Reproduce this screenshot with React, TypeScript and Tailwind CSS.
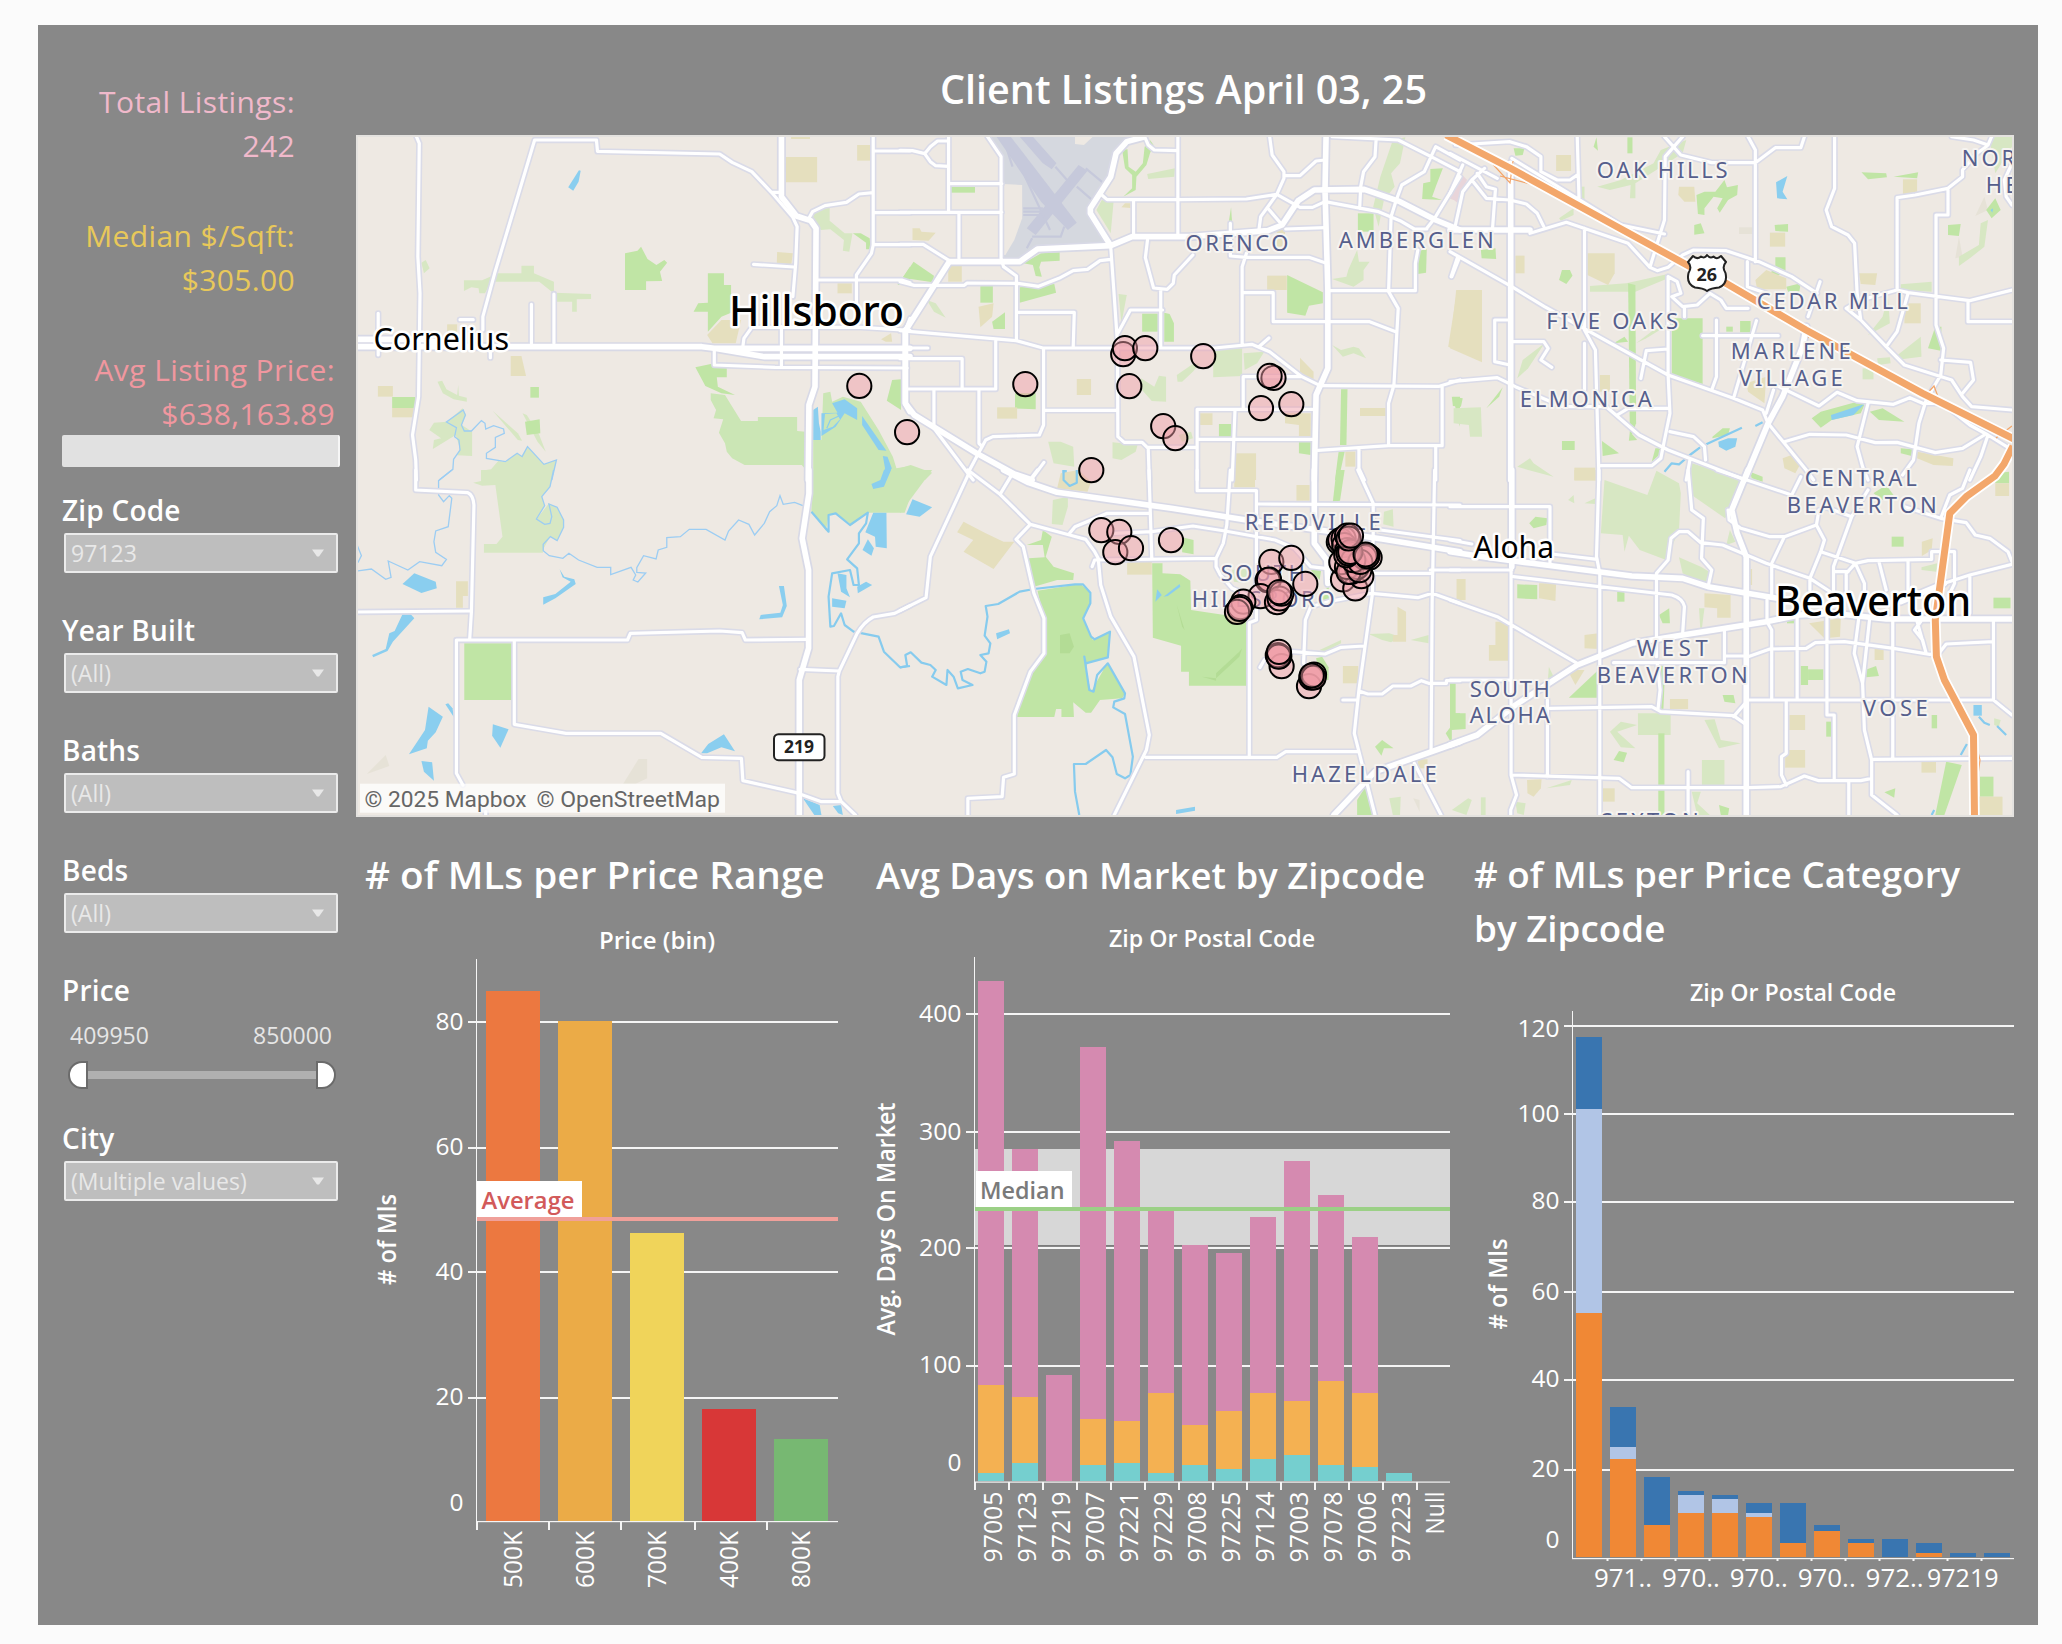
import React from "react";

type Pt = [number, number];

/* ------------------------------------------------------------------ */
/* Map geometry. Each tile holds shapes in its own local coordinates.  */
/* ------------------------------------------------------------------ */

type Tile = {
  transform: string;
  green?: string[];
  light?: string[];
  mid?: string[];
  tan?: string[];
  haze?: string[];
  pink?: string[];
  lakes?: string[];
  streams?: string;
  rivers?: string;
  minor: string;
  major: string;
};

const box = (x1: number, y1: number, x2: number, y2: number) =>
  `${x1},${y1} ${x2},${y1} ${x2},${y2} ${x1},${y2}`;

const TILES: Tile[] = [
  {
    transform: "translate(350 130) scale(0.357143 0.333333)",
    green: [
      "770,370 805,362 815,350 833,387 858,405 880,390 888,398 868,425 874,453 829,454 829,480 770,480",
      "1002,430 1047,430 1047,465 1067,465 1067,548 1040,560 1002,605 1002,545 962,545 975,520 1002,518",
      box(505, 771, 529, 803),
      "490,875 531,868 533,910 495,915",
      box(118, 801, 183, 834),
      box(1220, 100, 1240, 126),
      "967,712 1020,700 1055,715 1055,742 1027,742 1030,770 1078,795 1040,790 995,768",
      "1518,750 1543,748 1543,840 1503,812",
      "1408,310 1430,310 1455,325 1458,358 1445,358 1445,338",
      "1533,465 1568,410 1568,465",
    ],
    light: [
      "319,451 370,451 415,430 480,430 480,407 515,407 515,430 571,455 571,488 675,492 675,507 635,508 635,545 622,545 622,515 580,515 565,485 530,455 395,455 378,490 362,490 360,475 340,472 319,483",
      "1290,250 1343,232 1343,272 1385,310 1407,310 1398,365 1380,362 1383,330 1345,298 1318,300",
      "245,755 258,752 270,778 300,795 303,765 305,797 327,803 327,815 290,808 260,790",
      "222,900 235,878 272,875 315,835 325,855 313,885 342,905 342,978 300,976 308,955 296,915 232,957 235,930 255,925",
      "367,1022 395,1018 415,993 435,997 467,970 480,978 497,950 543,1003 578,990 565,1050 367,1050",
      "400,843 470,910 482,932 470,930",
      "483,850 495,855 530,915 548,965 525,935",
      "200,398 212,390 223,415 207,430",
    ],
    mid: [
      "1010,790 1050,795 1095,873 1142,873 1142,861 1252,861 1252,903 1275,905 1275,1018 1265,1005 1105,1005 1070,985 1055,965 1050,940 1033,908 1045,868 1018,865 1025,840 1010,810",
      "1297,930 1320,930 1325,790 1345,785 1350,815 1380,800 1430,815 1480,900 1520,980 1530,1015 1568,1008 1568,1050 1297,1050",
    ],
    tan: [
      box(78, 768, 120, 800),
      box(118, 834, 183, 862),
      "450,678 480,678 493,738 450,738",
      box(272, 583, 300, 612),
      box(1220, 81, 1308, 157),
      box(1420, 45, 1457, 92),
      "1196,366 1240,370 1235,408 1195,400",
      box(1365, 460, 1405, 490),
      box(1235, 20, 1288, 27),
      "1000,615 1040,570 1095,570 1080,640 1015,640",
      "1487,628 1515,610 1518,635 1500,635",
    ],
    lakes: [
      "611,172 641,121 646,122 640,155 625,182",
      "1297,840 1310,830 1313,880 1318,905 1318,930 1297,930",
      "1320,850 1365,848 1350,820 1385,808 1420,835 1420,870 1385,850 1360,890 1320,918",
      "1434,858 1502,962 1480,960 1434,885",
      "1492,978 1505,980 1517,1015 1500,1050 1487,1050 1498,1015",
    ],
    streams:
      "M250,1050L288,1018L290,988L308,960L305,930L293,920L298,893L270,876L317,840L323,855L312,885L320,903L340,903L368,872L378,880L380,897L402,887L430,897L432,910L407,922V952L382,970V985L435,995L468,970L482,980L497,950L543,1003L578,990L565,1050",
    minor:
      "M186,20L194,40L190,380L196,490L194,650L192,800L175,915L184,990L186,1050 M372,600V560L405,430L517,30H690L693,64L1035,72L1070,97L1125,125L1180,187H1205 M1180,187L1240,262L1252,290L1248,400L1240,500 M1130,403L1243,411 M79,550V675 M308,569H345 M508,523V640 M571,492V640 M393,650V683 M1020,660V705L1190,712L1560,714 M1100,650L1103,625L1125,592H1430L1568,601 M1208,590V710 M1285,265L1295,245L1330,227L1390,217L1425,192L1465,188 M1465,20V345L1460,370L1418,435V520 M1468,63H1568 M1468,248H1568 M1468,344H1568 M1310,450H1545L1568,458 M1555,600L1568,565",
    major:
      "M20,650H985L1020,655H1568 M20,628H200L330,650 M1020,655L1160,680H1568 M1208,20V200L1250,258L1290,272L1305,295L1302,770L1285,825L1283,1050 M1555,600V820L1568,845",
  },
  {
    transform: "translate(350 470) scale(0.357143 0.333333)",
    green: [box(320, 520, 456, 690)],
    light: [
      "367,0 570,0 560,50 537,80 545,105 522,148 557,100 580,115 598,150 598,170 580,212 560,200 540,240 540,248 375,248 375,222 410,222 427,200 407,45 370,47 345,38 367,33",
    ],
    mid: [
      "1292,0 1568,0 1568,85 1553,128 1450,128 1405,165 1360,130 1340,135 1333,182 1292,125",
    ],
    tan: ["297,334 330,334 330,378 316,378 316,413 297,413"],
    haze: ["47,912 100,855 110,888", "765,941 808,867 832,867 832,925 800,941"],
    lakes: [
      "147,342 180,310 240,335 243,355 200,369",
      "147,433 170,433 180,445 120,515 105,543 65,562 62,555 100,537 110,490 125,483",
      "220,710 260,740 240,787 218,812 215,835 165,853 210,780",
      "267,703 275,700 287,715 291,742",
      "400,763 444,778 421,833 398,797",
      "200,873 230,877 235,932 207,905",
      "983,850 1003,822 1047,793 1078,844 1040,832 1000,850",
      "587,298 600,320 628,328 632,342 575,385 541,404 541,382 575,372 618,335 595,322",
      "1201,348 1215,348 1223,408 1210,442 1146,448 1150,435 1205,428 1212,405",
      "1465,128 1502,128 1503,235 1472,230 1470,200 1443,187",
      "1268,985 1315,1005 1320,1035 1300,1035",
      "1352,1008 1375,1005 1380,1035 1367,1030",
      "1350,385 1390,392 1385,415 1350,410",
      "1365,310 1390,315 1390,355 1400,382 1375,365",
      "1420,350 1445,335 1462,345 1422,370",
      "1435,240 1450,208 1467,235 1460,257",
      "1460,42 1485,30 1495,0 1515,0 1495,50 1465,57",
    ],
    streams:
      "M285,0L248,32V75L262,95L278,77L285,85L275,170L240,183L235,215L240,247L270,268L257,287L195,275L162,300L107,273L115,322L100,328L60,297L20,303 M20,225L32,257L22,278 M570,0L560,50L537,80L545,107L522,147L545,163L560,160L565,140L557,102L580,112L598,150V172L580,212L561,200L541,223V242L558,257L596,265L613,250L640,270L692,292H730V314L787,292L800,315L793,330L806,336L828,309L803,307V293L822,257L857,267L863,240L887,232V203L925,200L950,178H997L1050,210L1060,183L1088,150L1117,163L1133,195L1160,160L1175,125L1195,107L1204,77L1213,103L1245,97L1268,107",
    rivers:
      "M1292,125L1340,185V135L1360,130L1400,165L1450,128L1445,160L1425,190V220L1392,268L1420,295L1425,345H1410L1400,300L1350,310L1340,380L1345,470L1355,468L1375,430L1385,465L1410,485L1480,500L1495,545L1540,592L1568,588",
    minor:
      "M184,0V60L330,68Q345,75 347,105L340,425L335,510 M20,426L335,423 M316,945L298,910V510H777L785,490L1035,483L1098,488L1107,510L1280,508 M460,515V763L605,790H870L985,862L1096,865L1100,932L1250,968L1320,995L1375,994 M1260,598L1370,603L1420,490Q1440,455 1465,441L1525,430L1568,407 M1370,603L1366,620V970L1375,994L1415,1035 M380,1025V1035",
    major: "M1285,0V70L1266,205L1284,300V535L1258,630V1035",
  },
  {
    transform: "translate(900 130) scale(0.357143 0.333333)",
    green: [
      "622,60 637,58 640,110 660,125 680,100 685,50 700,30 710,45 700,70 690,105 662,140 660,180 625,200 650,175 650,135 630,115",
      box(142, 171, 210, 188),
      "8,443 38,395 95,437 92,457 15,445",
      "345,400 395,370 447,367 447,392 395,395 390,412 397,440 380,438 372,405",
      "335,472 432,462 437,488 335,518",
      box(225, 468, 260, 518),
      "258,575 294,547 294,597 262,597",
      box(678, 551, 722, 605),
      "740,548 755,552 767,580 767,635 740,635",
      "1084,435 1184,487 1184,520 1145,527 1135,557 1084,548",
      "322,790 380,790 380,838 322,835",
      box(1282, 250, 1326, 305),
      "1450,365 1475,355 1473,428 1450,432",
      "1485,117 1520,115 1500,170 1490,200 1518,210 1462,207 1465,160 1485,155",
      "1235,778 1253,778 1250,945 1232,945",
      box(893, 882, 927, 920),
      "1228,965 1245,965 1228,1050 1218,1050",
      "1117,935 1150,935 1150,975 1117,970",
      "920,280 927,232 930,280",
      "1548,800 1568,800 1568,890",
    ],
    light: [
      "550,240 565,210 598,215 590,310",
      "692,132 770,115 768,140 695,147",
      "877,660 958,655 958,738 877,742",
      "775,735 820,702 840,700 820,725 790,755 777,755",
      "675,745 712,770 725,737 745,740 745,815 705,813 672,773",
      "1380,30 1415,22 1400,100 1375,130 1385,170 1355,210 1340,290 1325,230 1345,140",
      "1255,420 1280,360 1285,395 1315,395 1298,420 1298,450 1270,470 1210,447 1250,440",
      "415,935 450,935 485,950 488,1010 430,1000",
      "595,937 665,945 660,965 620,990 595,985",
      "1210,645 1235,660 1270,650 1285,655 1305,685 1270,670 1240,680",
      "612,492 635,495 620,580",
      "962,670 1020,665 1000,700 965,720",
      "75,510 100,520 128,563 95,545",
      "780,915 815,905 820,925 790,935",
    ],
    mid: ["0,1015 30,1005 90,1028 70,1050 0,1050"],
    tan: [
      "35,295 55,295 60,305 100,308 80,332 35,330",
      "220,530 262,520 258,560 225,592",
      box(135, 405, 173, 455),
      box(495, 747, 535, 795),
      box(272, 832, 328, 866),
      box(1028, 437, 1083, 480),
      "1560,480 1568,480 1568,665 1535,650",
      box(840, 850, 875, 885),
      "1078,850 1150,850 1150,918 1117,918 1117,885 1078,880",
      box(1288, 834, 1360, 858),
      box(936, 970, 997, 1050),
      "1120,683 1158,725 1158,748 1120,730",
      box(1247, 965, 1275, 1010),
      "620,232 630,220 645,220 645,234",
      box(1055, 300, 1078, 350),
    ],
    pink: ["1535,205 1568,140 1568,215"],
    lakes: [box(455, 1020, 467, 1050), box(485, 1033, 500, 1050)],
    minor:
      "M0,61L35,62L69,71L85,50L105,33H135 M69,71L85,95L100,107L135,109 M136,20V245 M0,247H285 M140,161H285 M165,250V385 M245,20L283,80V385L290,410L326,438V630 M0,343H65L138,392 M0,455L40,466H180L188,459L330,460L388,469L445,445L485,422L525,418L560,392L590,388 M326,547H488L485,650 M0,602L325,632L400,654H880L985,643L1035,665L1125,740L1175,766 M268,632V777H20 M0,686H174V775 M0,654H78 M95,778V895 M221,780V940L230,950 M402,655V885L390,915L260,920L240,930L222,965L190,1030 M404,841H605 M590,350L598,470L609,640L610,920L628,937H678L695,955L698,1050 M695,952H830 M565,195L580,209H780L970,207L1055,193 M654,213V315 M778,20V315 M685,20L695,45L712,60L778,62 M693,330L687,383L710,474L748,478L765,460L768,435L820,375 M730,478V650 M610,610L645,540H735 M925,280V378L970,382H1145L1190,398 M970,370L958,410V640 M960,488H1045V575H1315L1388,605 M1035,20L1042,75L1075,125V145L1055,193L1010,260L1005,300 M1075,137H1120L1165,93L1190,90 M1055,193L1120,232H1155L1190,215 M1030,235L1070,285 M1080,297L1190,293 M1333,30L1330,80L1298,125L1290,170L1287,235 M1190,215L1340,245L1400,272L1440,297H1475 M1210,20L1395,30L1487,80L1568,125 M1568,90L1500,50L1487,80L1468,125L1405,165L1388,215L1375,260L1368,485L1395,535L1383,765L1368,820V945 M1200,482H1443V400L1450,360 M1475,295L1495,268L1568,140 M1180,767L1510,769L1568,750 M1518,770V947H1368L1170,961 M961,835V740H1125 M832,1050V838H1155 M832,928H1155 M938,840L930,1050 M1285,955V1015L1300,1050 M1500,950V1050 M95,895L190,1030L205,1050 M403,997L370,1045 M1005,650L1033,624 M1543,440L1560,385",
    major:
      "M15,602V820L40,855L215,970L320,1032L370,1050 M15,602L138,395H335L385,357L590,347L650,320H810L1030,302L1070,285L1115,212L1160,180L1300,178L1400,215L1500,270L1568,300 M590,347L533,250V235L590,140L605,70L635,35L680,22 M1193,20L1190,180L1198,480V715L1165,795L1160,1050",
  },
  {
    transform: "translate(900 470) scale(0.357143 0.333333)",
    green: [
      "385,362 505,342 530,365 533,400 512,445 540,510 588,483 580,565 525,580 520,600 535,665 580,580 630,670 622,685 560,690 535,728 520,728 485,697 487,741 452,741 452,717 437,717 432,741 327,741 365,605 403,550 403,445",
      "400,180 425,200 408,260 430,290 487,310 485,330 440,330 375,350 360,265 405,262 400,225 355,225 395,210",
      "706,280 735,280 735,310 785,313 813,332 815,420 970,445 970,647 809,647 809,605 787,605 787,527 708,503",
      "790,202 822,210 822,253 790,247",
      "1222,0 1245,0 1232,92 1212,95",
      "1540,640 1555,640 1555,730 1568,730 1568,775 1540,775",
      "1280,1035 1280,990 1303,950 1322,1035",
      "1330,830 1350,810 1382,835 1355,835 1348,857",
      "1150,300 1180,295 1175,330",
      "1165,565 1182,560 1200,592 1200,630 1180,630",
      "1180,370 1200,350 1205,390 1185,395",
      "1528,790 1542,770 1540,812",
    ],
    light: [
      "428,90 470,80 470,110 455,165 425,162",
      "1312,492 1370,490 1400,500 1375,517 1350,510",
      "1355,125 1380,118 1382,170 1353,163",
      "1430,510 1480,495 1480,520",
      "1370,985 1402,980 1400,1035 1380,1035",
      "1175,540 1235,510 1235,520 1190,545",
      "930,300 975,295 970,340 935,335",
    ],
    mid: ["0,0 90,0 0,130"],
    tan: [
      "178,155 240,190 290,215 320,215 262,297 178,245 205,210 160,187",
      box(636, 273, 705, 314),
      box(936, 0, 994, 52),
      box(1110, 45, 1147, 92),
      box(1240, 588, 1283, 640),
      "1393,410 1417,425 1417,515 1380,515 1380,495 1393,495",
      "450,10 500,0 535,35 525,65 440,55",
      box(1560, 328, 1568, 388),
      box(1450, 868, 1477, 895),
    ],
    haze: ["1437,985 1455,990 1455,1025"],
    lakes: [
      "35,88 90,112 55,140 17,133",
      "269,490 305,478 308,490 272,508",
      "773,1020 826,1010 826,1022 773,1032",
      "720,358 733,375 715,395",
      "738,380 783,342 785,350 750,378",
    ],
    rivers:
      "M375,357L490,343H512L533,368V400L513,445L535,500L545,508L588,485L582,562L520,580L516,560L530,660L542,665L552,615L582,580L630,670L628,685L600,695L597,712L630,732L652,860L645,915L630,925L607,912L595,862L577,840L520,882H487L490,965L502,1035 M375,357L335,365L275,402L240,408L245,440L237,497L253,520L248,550L225,555L242,575L237,605L225,610L190,597L170,605L175,630L203,645L162,655L150,620L133,600L130,645L90,620L100,600L85,585L60,578L30,547L15,555L20,588L0,592 M458,0V30L475,48L495,38V0",
    minor:
      "M195,5L85,260L73,383L0,422 M190,0L280,73L310,20 M385,0L360,35 M280,73L365,163L475,195L520,208L545,245L555,265L562,345L590,440L655,560L698,795L690,840L600,1035 M475,190L490,170L580,130H700 M697,0L705,265 M365,163L325,208L345,230L375,370L403,445V550L365,605L320,735V912L290,922L286,980L190,985V1035 M538,290L545,270L885,265 M600,190L705,185L820,168L910,183L1050,210L1105,235L1150,290L1190,295 M925,0L915,165L905,220L885,265V290L897,315L930,355L985,380 M832,0V62H998V450L978,458V862 M1003,102L1568,105 M688,862H1055L1080,845H1285 M1282,0L1325,100V190 M1497,0L1490,400L1487,840 M1568,300H1485 M1310,310H1485 M1200,395L1320,370L1450,383L1490,370L1568,400 M1325,180L1323,370L1285,660L1272,790L1285,845L1330,1035 M1200,395L1150,410L1135,450L1130,580 M1100,545L1190,552L1235,532L1300,528 M1008,592L1020,570 M1285,663L1310,672H1350L1380,648H1430L1460,632L1480,640H1530V632H1568 M1240,690H1280 M1440,880L1515,1035 M1345,180L1568,212",
    major:
      "M290,0L360,38L440,67L760,115L970,150L1240,190L1350,207L1568,245 M1160,0V220L1195,270L1198,340 M1215,1035L1330,905L1568,815",
  },
  {
    transform: "translate(1450 130) scale(0.363508 0.333333)",
    green: [
      "175,55 205,55 200,75 180,77",
      "395,50 403,22 407,62",
      box(488, 22, 502, 70),
      "610,565 695,565 695,762 610,735",
      "678,195 700,185 730,185 755,150 762,172 792,165 790,195 765,210 742,248 735,235 750,205 725,200 700,235 700,255 682,252",
      "672,285 690,280 700,310 672,314",
      "893,285 930,282 930,305 895,303",
      "895,382 923,382 923,430 870,445 895,410",
      "85,360 125,355 127,387 87,385",
      "308,420 330,420 337,437 320,462 300,450",
      "490,460 510,465 512,880 495,930",
      "1370,285 1405,282 1400,318 1370,315",
      "1315,655 1335,590 1352,590 1350,662",
      "1132,127 1200,130 1202,142 1150,148",
      "1220,140 1288,127 1285,145",
      "1475,240 1500,205 1515,240 1490,265",
      "995,865 1020,845 1120,815 1140,825 1130,850 1050,870 1020,893",
      "1155,845 1190,835 1250,875 1180,870",
      box(308, 933, 343, 960),
      "418,933 465,970 420,978",
      box(760, 590, 778, 605),
      box(798, 573, 827, 607),
      "722,920 750,895 770,895 765,915 722,925",
      "5,800 35,805 30,830 8,828",
      "450,640 480,620 490,635",
      "925,470 965,460 960,490 930,485",
      "1240,955 1272,958 1270,978 1240,970",
      "555,995 565,955 578,955 575,975",
      "495,905 515,930 492,932",
      "100,835 145,772 135,800",
    ],
    light: [
      "405,170 470,150 560,100 580,60 650,30 640,70 510,160 510,205 495,205 497,165 440,180",
      box(360, 170, 370, 210),
      "385,468 485,460 600,432 600,445 510,485 385,485",
      "10,835 85,832 88,920 55,920 52,885 10,880",
      "300,265 340,235 340,255 305,272",
      "185,745 200,690 260,640 215,715",
      "1240,463 1325,455 1325,485 1240,480",
      "1220,685 1295,620 1297,680 1225,690",
      box(1135, 715, 1165, 748),
      "1175,685 1210,682 1212,700 1178,705",
      "1460,280 1480,270 1470,350 1430,385 1400,408 1400,380 1455,345",
      "1150,615 1190,560 1205,500 1210,580",
      "665,1000 800,1045 800,1050 655,1050",
      "512,640 560,600 600,585 540,625",
      "185,1010 220,985 230,1000 285,1040 215,1020",
      "1480,22 1546,20 1546,50 1500,130 1490,60",
    ],
    tan: [
      box(292, 75, 333, 123),
      "630,170 672,170 675,215 645,215 628,195",
      "378,370 453,370 453,430 435,465 378,435",
      box(180, 377, 205, 430),
      box(880, 308, 922, 350),
      "840,450 870,420 925,445 925,478 845,478",
      "1125,430 1175,430 1170,465 1130,462",
      box(1250, 520, 1295, 580),
      "17,480 88,480 88,697 0,655",
      "815,760 870,740 865,820 820,785",
      box(1246, 148, 1285, 195),
      "1285,965 1385,985 1383,1008 1330,1005 1285,985",
      "915,985 940,975 965,1000 950,1030 920,1015",
      box(342, 1013, 400, 1050),
      box(412, 735, 440, 785),
    ],
    haze: [box(795, 292, 832, 312), "1445,258 1470,200 1480,240", "1390,385 1400,320 1410,380"],
    pink: ["0,200 30,130 47,150 20,218"],
    lakes: [
      "897,157 928,138 915,185 928,208 900,205",
      "1048,855 1140,822 1110,855 1050,870",
      "738,935 765,925 790,925 785,950 760,962 740,950",
      "1487,240 1494,235 1492,248",
    ],
    rivers: "M705,943L803,893 M840,888L860,877 M590,1025L610,1000L630,1003L660,975L688,952",
    minor:
      "M15,45L165,35L210,50L250,80V125L295,150H330L350,135 M350,20L355,210 M0,70L130,145 M60,150L95,115 M35,105L0,190 M60,150L100,205L165,210L210,222L240,250L258,290 M75,130L100,170L125,178L117,295 M60,150L35,185L15,285 M170,85L470,285L590,312 M220,310L320,277L490,340L550,412L570,422L600,412L640,375L670,360L760,362L850,395L940,440L1010,490 M370,295V600L400,660L410,1050 M550,412L570,340L590,270L592,80L640,20 M590,20L635,75L720,98H840L895,53H965L975,20 M820,20L840,60V395 M818,395V470L870,490 M1058,20V175L1035,240L1050,290L1095,315L1113,340L1120,490L1130,570L1200,650L1250,705L1380,750L1410,800L1435,830L1546,840 M1380,20L1440,30L1480,45L1490,20 M1475,50L1450,70L1410,120V140L1370,175L1280,195L1230,203V480L1260,488L1430,512L1546,480 M1370,175V255H1337V585L1358,655L1350,735L1310,810L1290,880L1275,990L1245,1035 M1350,690L1432,697L1440,750L1410,790 M1425,512V575H1546 M1230,480L1130,510L1090,535L1130,570 M1260,490L1230,605L1200,650 M1018,455L985,560 M0,365L170,470L260,530L600,735L780,805L860,840L875,880L920,940L980,1020L1000,1050 M5,440L25,385 M600,440V735L605,850L590,930L580,985L555,1007H415 M600,440L625,455L635,490L610,500L640,530L680,525L715,490L745,510L760,535H820 M645,560V530 M733,570V740L720,780 M695,617H903 M843,572L780,805 M525,745L540,662L600,657 M175,635H258L270,655L250,690L280,712 M160,570H123V695L165,705 M0,755L130,743L180,770L310,830H430L520,915L600,960L800,1045 M370,640V780 M460,855L490,835H600 M605,905L670,920L700,950L703,990 M660,990L650,1050 M890,780L870,850 M905,770L1015,828L1065,787L1120,812L1220,823L1265,803L1300,820H1355L1430,885L1480,915L1546,960 M1150,820L1120,950L1135,1010L1150,1050 M920,935L990,913L1090,915L1170,938L1230,937L1335,968L1410,955L1470,915 M1480,915L1460,980L1430,1050 M1546,100 L1525,150L1530,200L1546,225",
    major: "M0,300H220 M167,100V1050 M980,590L970,650L915,800L875,880L810,1050",
  },
  {
    transform: "translate(1450 470) scale(0.363508 0.333333)",
    light: [
      "425,30 543,75 568,2 630,40 635,70 630,180 595,270 522,240 492,197 480,245 475,195 415,190",
      "660,0 740,0 815,30 757,145 665,75",
      "630,262 690,290 720,310 700,345 640,310",
      "760,225 770,180 785,215",
      box(517, 730, 607, 795),
      "440,785 470,755 515,765 460,785 510,835 470,832",
      box(693, 870, 755, 945),
      "700,750 728,748 745,810 800,820 740,835",
      "5,1020 50,985 60,990 45,1035",
      box(85, 982, 98, 1035),
      "1297,292 1340,280 1338,305 1297,300",
      "685,415 700,415 690,500",
      "268,650 272,590 285,620",
      "665,965 690,965 680,1000 715,1035 680,1035",
      "265,955 335,930 330,945",
      "180,995 208,1000 203,1035 185,1030",
      "325,90 340,75 342,100",
      "370,100 400,85 400,102",
      "1497,745 1515,750 1510,770 1497,765",
    ],
    green: [
      "185,343 240,345 240,388 185,385",
      "218,160 235,140 268,145 265,165 230,175",
      "327,683 405,603 407,683",
      "575,435 603,415 605,460 585,460",
      box(460, 365, 480, 395),
      box(965, 588, 985, 645),
      box(985, 598, 1027, 630),
      "1142,600 1172,588 1180,618 1145,622",
      "0,640 15,640 15,730 43,730 43,777 5,780 5,820 0,820",
      box(1215, 200, 1248, 230),
      box(1495, 383, 1542, 415),
      box(573, 790, 590, 1035),
      "575,585 592,590 587,720 577,718",
      "750,675 780,675 785,700 755,695",
      box(1035, 755, 1048, 800),
      "450,870 465,843 487,848 478,877",
      "740,1005 768,1015 765,1035 745,1035",
      "1195,967 1225,955 1222,983",
      box(1325, 735, 1340, 775),
      "1335,1035 1365,875 1408,885 1360,1035",
      box(1458, 920, 1495, 980),
      "1165,70 1200,45 1220,75 1190,90",
      "825,5 860,20 860,35 830,25",
      "1500,10 1538,5 1538,40 1500,40",
      box(927, 445, 950, 460),
    ],
    tan: [
      box(342, 0, 402, 32),
      box(18, 327, 43, 390),
      "245,340 292,340 290,393 245,385",
      "125,455 162,455 162,572 107,572 107,525 125,525",
      "370,495 408,490 408,537 370,535",
      "323,600 370,600 345,645",
      box(605, 687, 655, 717),
      "700,370 772,375 772,443 735,443 735,415 700,412",
      "988,460 1075,445 1073,500 1030,505",
      box(1168, 535, 1193, 570),
      box(933, 735, 977, 780),
      box(922, 840, 977, 893),
      box(420, 955, 453, 995),
      box(1297, 873, 1337, 908),
      "1298,215 1328,205 1325,240 1298,258",
      box(1440, 980, 1520, 1035),
      "212,930 252,928 250,955 230,980 213,970",
      box(1500, 40, 1538, 78),
      box(825, 297, 831, 345),
    ],
    lakes: [box(1440, 705, 1463, 737)],
    rivers: "M1455,740L1470,758L1485,765 M1505,768L1530,795 M1405,855L1422,822 M1325,1035L1332,1020",
    minor:
      "M410,0L403,260L412,310V1035 M0,110H275V280 M0,210L60,222 M280,252L405,268 M0,300H170 M175,320L410,350L610,375Q640,385 645,410L640,490 M568,560V310L600,270L608,205L630,185H655L690,218L750,225L870,280L990,325L1060,375 M655,0L665,120L697,145L692,265L720,300L710,350 M765,120L768,150L800,175L880,200H920L1008,165 M920,200L885,280V385 M735,0L940,75L965,20 M1015,120L1008,165L1030,210L1020,245L990,325V360 M1150,60L1105,140L1055,290V365 M1105,140L1030,110 M1020,245L1115,280L1150,272L1325,268V245H1388V340L1375,370 M1115,280L1090,310V360 M1060,305H1095 M1115,280L1140,340V380 M1180,275L1200,360 M1260,272V370 M1350,145L1250,110 M1430,0L1410,55L1375,75L1350,145L1420,158L1445,195L1485,205L1535,245L1546,275 M1546,283L1430,315L1360,340 M1430,315V430 M872,390V455L885,480V690 M955,440V690 M1037,440V735H1057V930 M1125,440L1112,550L1135,640L1140,780L1160,870V975L1230,1035 M1155,440L1135,640 M1218,450V865 M1295,455L1278,480L1300,510L1310,550L1285,455 M1495,455V690 M820,560L880,537L980,535L1005,518L1085,515L1220,535L1320,553L1345,550L1365,522L1495,515 M755,480V578H450 M755,558H820 M780,740L820,690H1495L1546,735 M275,715L555,710L580,725L780,737L810,760 M570,580L578,660L572,720 M0,390L130,440L350,580 M168,290V915L183,975L167,1020V1035 M268,690V920 M168,915L465,925L500,953H820L910,950L975,918L1015,932H1130L1160,925 M655,905V1035 M925,695V850L912,860V915L925,945 M1097,935V1035 M1165,868L1546,865 M0,630H165",
    major:
      "M170,0V290 M820,0L775,120L790,190L815,260V1035 M0,245L100,262L225,280L500,318L640,325L710,350L900,385 M0,825L75,795L180,705L350,585L500,520L640,495L870,455L960,435L1050,430L1200,447H1546 M1240,395L1360,340",
  },
];

const HIGHWAY_A = "M1446,135L1510,168L1617,226.7L1690,266.7L1726,283.3L1806,330L1922.6,393.3L2016,440";
const HIGHWAY_B = "M2013,446L2004,464L1995,476L1966.2,496.7L1949.8,513.3L1935.3,620L1936.4,656.7L1944.4,680L1973.5,735L1974.5,817";

/* x, baseline, width, text */
const PLACES: [number, number, number, string][] = [
  [1186.8, 250.7, 101, "ORENCO"],
  [1340, 247.3, 153, "AMBERGLEN"],
  [1246, 529.7, 134, "REEDVILLE"],
  [1222, 580.7, 82, "SOUTH"],
  [1193, 607, 141, "HILLSBORO"],
  [1293, 782, 143, "HAZELDALE"],
  [1598, 178, 129, "OAK HILLS"],
  [1963, 166, 86, "NORTH"],
  [1987, 193, 80, "HEIGH"],
  [1758, 309, 149, "CEDAR MILL"],
  [1547.5, 328.7, 130, "FIVE OAKS"],
  [1732, 359, 118, "MARLENE"],
  [1740, 386, 102, "VILLAGE"],
  [1521, 407, 130, "ELMONICA"],
  [1806, 486, 110, "CENTRAL"],
  [1788, 512.7, 148, "BEAVERTON"],
  [1638, 656, 69, "WEST"],
  [1598, 683, 149, "BEAVERTON"],
  [1471, 697, 78, "SOUTH"],
  [1471, 723, 78, "ALOHA"],
  [1864, 715.7, 63, "VOSE"],
  [1602, 828.5, 96, "SEXTON"],
];

/* x, baseline, width, font size, text */
const CITIES: [number, number, number, number, string][] = [
  [729, 326.3, 175, 41, "Hillsboro"],
  [373.5, 350.3, 135.5, 31, "Cornelius"],
  [1473.5, 558, 80.5, 31, "Aloha"],
  [1775, 616, 196, 41, "Beaverton"],
];

const LISTINGS: Pt[] = [
  [859, 385.7], [906.8, 432], [1025, 384], [1122.9, 354], [1124.6, 348], [1145, 348], [1202.9, 356],
  [1129, 386], [1273.2, 377.7], [1269.3, 375.7], [1260.7, 408], [1291, 404], [1162.9, 426], [1175, 438],
  [1091, 470], [1101, 530], [1119, 531.7], [1115, 552], [1130.7, 548], [1170.7, 540],
  [1271, 561.7], [1291, 557.7], [1305, 583.7], [1267.3, 580], [1268.7, 579.3], [1260.3, 596],
  [1243, 601.5], [1240, 607], [1236.7, 611.7], [1239.3, 608.7], [1276.7, 602], [1279.3, 598.3], [1281, 593.5], [1279, 592],
  [1281.3, 666], [1279, 656], [1277.5, 655], [1278.3, 656.5], [1278.7, 651.7],
  [1308.7, 686], [1311, 677.5], [1313.7, 674.3], [1313.3, 677.3], [1311.5, 675.3],
  [1342.7, 579.3], [1355, 588.3], [1361, 576], [1350.7, 571.7], [1341, 562], [1346.7, 566.7], [1356.7, 566.7],
  [1348.3, 571.7], [1359, 570], [1369.3, 557.3], [1367, 555.5], [1364, 557], [1338.5, 541.7], [1340, 540],
  [1343.3, 538.3], [1344, 545], [1347, 550], [1353, 560], [1360, 561.7], [1346, 555], [1348.3, 553.3],
  [1350, 551.7], [1366.7, 556], [1365.3, 554.3], [1346.7, 535.5], [1348.3, 538.3], [1350.7, 535.5],
];

const FONT = "'Open Sans', 'Noto Sans', sans-serif";

function Txt(props: {
  x: number;
  y: number;
  w?: number;
  size?: number;
  weight?: number;
  fill?: string;
  anchor?: "start" | "end" | "middle";
  family?: string;
  vertical?: boolean;
  children: string;
}) {
  const { x, y, w, size = 24, weight = 400, fill = "#fff", anchor = "start", family = FONT, vertical, children } = props;
  return (
    <text
      x={vertical ? 0 : x}
      y={vertical ? 0 : y}
      transform={vertical ? `translate(${x} ${y}) rotate(-90)` : undefined}
      fontSize={size}
      fontWeight={weight}
      fill={fill}
      textAnchor={anchor}
      fontFamily={family}
      textLength={w}
      lengthAdjust="spacingAndGlyphs"
    >
      {children}
    </text>
  );
}

function Polys({ items, fill }: { items?: string[]; fill: string }) {
  return (
    <>
      {(items ?? []).map((p, i) => (
        <polygon key={i} points={p} fill={fill} />
      ))}
    </>
  );
}

function RoadPass({ kind, color, width }: { kind: "minor" | "major"; color: string; width: number }) {
  return (
    <>
      {TILES.map((t, i) => (
        <g key={i} transform={t.transform}>
          <path
            d={t[kind]}
            fill="none"
            stroke={color}
            strokeWidth={width}
            strokeLinejoin="round"
            strokeLinecap="round"
            vectorEffect="non-scaling-stroke"
          />
        </g>
      ))}
    </>
  );
}

function ListingMap() {
  return (
    <svg className="block shrink-0" width={1658} height={682} viewBox="356 135 1658 682">
      <defs>
        <clipPath id="mapArea">
          <rect x={358} y={137} width={1654} height={678} />
        </clipPath>
      </defs>
      <rect x={356} y={135} width={1658} height={682} fill="#e4e2df" />
      <g clipPath="url(#mapArea)">
        <rect x={358} y={137} width={1654} height={678} fill="#eee9e3" />

        {/* airport */}
        <g transform={TILES[2].transform}>
          <polygon
            points="250,20 645,20 610,70 590,140 535,230 535,250 585,345 390,352 335,385 290,385 290,80"
            fill="#d5d8df"
          />
          <polygon points="290,162 342,165 342,265 320,330 295,375 290,375" fill="#eee9e3" />
          <polygon points="490,20 540,20 515,45 490,42" fill="#eee9e3" />
          <polygon points="270,20 310,20 495,278 470,300 395,215" fill="#c6c9db" />
          <polygon points="500,105 525,122 380,315 355,295" fill="#c6c9db" />
          <polygon points="335,20 372,20 438,100 425,118 400,100" fill="#c6c9db" />
          <path
            d="M345,120L350,140L420,300 M435,110L480,165 M495,170L540,212 M520,115L568,158 M300,60L315,110 M345,235H400 M345,245H395 M345,255H390 M370,320H450L460,290 M355,355L370,325"
            fill="none"
            stroke="#c6c9db"
            strokeWidth={2.2}
            vectorEffect="non-scaling-stroke"
          />
        </g>

        {TILES.map((t, i) => (
          <g key={i} transform={t.transform}>
            <Polys items={t.haze} fill="#e6e2d7" />
            <Polys items={t.light} fill="#d7e7c3" />
            <Polys items={t.mid} fill="#cbe6b5" />
            <Polys items={t.green} fill="#c0e5a5" />
            <Polys items={t.tan} fill="#e5dfbe" />
            <Polys items={t.pink} fill="#e8d5da" />
            <Polys items={t.lakes} fill="#8aceef" />
            <path d={t.streams} fill="none" stroke="#9ccdf3" strokeWidth={1.3} vectorEffect="non-scaling-stroke" />
            <path d={t.rivers} fill="none" stroke="#86cbee" strokeWidth={2.2} strokeLinejoin="round" vectorEffect="non-scaling-stroke" />
          </g>
        ))}

        <g transform={TILES[3].transform} fill="#b3dc95">
          <polygon points="448,495 475,490 487,530 475,550 448,550" />
          <polygon points="845,620 885,632 885,610 950,545 958,535 950,560 885,625" />
          <polygon points="775,405 797,480 790,470" />
        </g>
        <g transform={TILES[0].transform}>
          <polygon points="1330,852 1362,850 1372,868 1352,890 1326,900" fill="#cbe6b5" />
          <path d="M1335,895L1345,870L1375,855" stroke="#8aceef" strokeWidth={1.2} fill="none" vectorEffect="non-scaling-stroke" />
        </g>

        <RoadPass kind="minor" color="#dadbe8" width={6.4} />
        <RoadPass kind="major" color="#d8d9e6" width={9} />
        <RoadPass kind="minor" color="#ffffff" width={3.2} />
        <RoadPass kind="major" color="#ffffff" width={5.6} />

        <path
          d="M1489,160L1510,183L1513,161 M1500,176L1530,184 M1923,398L1934,386L1940,402 M1996,438L2012,426 M1803,325L1809,338 M2004,466L2012,452 M1935,600L1941,570 M1978,752L1980,760L1976,790"
          fill="none"
          stroke="#f3a569"
          strokeWidth={1.2}
        />
        {[HIGHWAY_A, HIGHWAY_B].map((d, i) => (
          <path key={i} d={d} fill="none" stroke="#ffffff" strokeWidth={10.5} strokeLinejoin="round" />
        ))}
        {[HIGHWAY_A, HIGHWAY_B].map((d, i) => (
          <path key={i} d={d} fill="none" stroke="#f3a76b" strokeWidth={7} strokeLinejoin="round" />
        ))}

        {/* place names */}
        <g stroke="#f6f4f1" strokeWidth={4} strokeLinejoin="round" style={{ paintOrder: "stroke" }}>
          {PLACES.map(([x, y, w, s], i) => (
            <text
              key={i}
              x={x - 1.3}
              y={y + 0.3}
              fontSize={22}
              textLength={w + 2}
              fill="#565f8c"
              fontFamily="'Noto Sans', 'Open Sans', sans-serif"
            >
              {s}
            </text>
          ))}
        </g>
        <g stroke="#ffffff" strokeWidth={5} strokeLinejoin="round" style={{ paintOrder: "stroke" }}>
          {CITIES.map(([x, y, w, size, s]) => (
            <Txt
              key={s}
              x={x}
              y={y}
              w={w}
              size={size}
              weight={size > 40 ? 500 : 400}
              fill="#000"
              family="'Noto Sans', 'Open Sans', sans-serif"
            >
              {s}
            </Txt>
          ))}
        </g>

        {/* route shields */}
        <rect x={774} y={734.2} width={50.5} height={26} rx={4.5} fill="#fff" stroke="#222" strokeWidth={2} />
        <Txt x={784} y={753} w={30} size={18} weight={700} fill="#222">
          219
        </Txt>
        <path
          d="M1693,256 Q1697,260 1701,256.500 Q1704.500,259 1707,255 Q1710,259 1713.500,256.500 Q1717,260 1721,256 L1726,262 Q1721.500,267 1725.500,273 Q1728,284 1719,287.500 Q1711,288 1707,291 Q1703,288 1695,287.500 Q1686,284 1688.500,273 Q1692.500,267 1688,262 Z"
          fill="#fff"
          stroke="#222"
          strokeWidth={2}
          strokeLinejoin="round"
        />
        <Txt x={1696.5} y={280.6} w={20.5} size={18} weight={700} fill="#222">
          26
        </Txt>

        {LISTINGS.map(([cx, cy], i) => (
          <circle key={i} cx={cx + 0.3} cy={cy + 0.2} r={12.1} fill="#f19ca8" fillOpacity={0.48} stroke="#000" strokeWidth={2} />
        ))}

        <rect x={360} y={783.7} width={365} height={29} fill="#fff" fillOpacity={0.75} />
        <Txt x={364.5} y={806.7} w={162} size={22} fill="#666" family="Roboto, sans-serif">
          © 2025 Mapbox
        </Txt>
        <Txt x={536.5} y={806.7} w={183.5} size={22} fill="#666" family="Roboto, sans-serif">
          © OpenStreetMap
        </Txt>
      </g>
    </svg>
  );
}

/* ------------------------------------------------------------------ */
/* Charts                                                              */
/* ------------------------------------------------------------------ */

const AXIS = "#f5f5f5";

function Grid({ rows, x1, x2 }: { rows: number[]; x1: number; x2: number }) {
  return (
    <>
      {rows.map((y) => (
        <rect key={y} x={x1} y={y - 1} width={x2 - x1} height={2} fill={AXIS} />
      ))}
    </>
  );
}

const PRICE_BARS: [number, number, string, string][] = [
  [486, 991, "#ec7840", "500K"],
  [558, 1021, "#ebab47", "600K"],
  [630, 1233, "#f0d45a", "700K"],
  [702, 1409, "#d83737", "400K"],
  [774, 1439, "#77b872", "800K"],
];

function PriceRangeChart() {
  return (
    <svg className="block" width={506} height={724} viewBox="356 901 506 724">
      <Txt x={599} y={949} w={116} size={23} weight={600}>
        Price (bin)
      </Txt>
      <Grid rows={[1022, 1148, 1272, 1398]} x1={468} x2={838} />
      {PRICE_BARS.map(([x, top, fill, label]) => (
        <React.Fragment key={label}>
          <rect x={x} y={top} width={54} height={1521 - top} fill={fill} />
          <Txt x={x + 36} y={1531} w={57} size={25} anchor="end" vertical>
            {label}
          </Txt>
        </React.Fragment>
      ))}
      <rect x={476} y={959} width={1} height={563} fill={AXIS} />
      <rect x={476} y={1521} width={362} height={1.2} fill={AXIS} />
      {[476, 548, 620, 694, 766].map((x) => (
        <rect key={x} x={x} y={1522} width={2} height={8} fill={AXIS} />
      ))}
      {([["80", 1029.5], ["60", 1155], ["40", 1279.5], ["20", 1405], ["0", 1511]] as [string, number][]).map(([s, y]) => (
        <Txt key={s} x={463.5} y={y} w={s === "0" ? 14 : 28} size={24} anchor="end">
          {s}
        </Txt>
      ))}
      <rect x={477} y={1217} width={361} height={4} fill="#f0a09a" />
      <rect x={477} y={1181} width={105} height={36} fill="#fff" />
      <Txt x={481.5} y={1209} w={93} size={24} weight={600} fill="#d25a5a">
        Average
      </Txt>
      <Txt x={396} y={1285} w={91} size={25} weight={650} vertical>
        # of Mls
      </Txt>
    </svg>
  );
}

/* label, total top, orange top, teal top */
const DAYS: [string, number | null, number | null, number | null][] = [
  ["97005", 981, 1385, 1473],
  ["97123", 1149, 1397, 1463],
  ["97219", 1375, null, null],
  ["97007", 1047, 1419, 1465],
  ["97221", 1141, 1421, 1463],
  ["97229", 1211, 1393, 1473],
  ["97008", 1245, 1425, 1465],
  ["97225", 1253, 1411, 1469],
  ["97124", 1217, 1393, 1459],
  ["97003", 1161, 1401, 1455],
  ["97078", 1195, 1381, 1465],
  ["97006", 1237, 1393, 1467],
  ["97223", null, null, 1473],
  ["Null", null, null, null],
];

function DaysOnMarketChart() {
  return (
    <svg className="block" width={596} height={724} viewBox="862 901 596 724">
      <Txt x={1109} y={947} w={206} size={23} weight={600}>
        Zip Or Postal Code
      </Txt>
      <Grid rows={[1014, 1132, 1248, 1366]} x1={966} x2={1450} />
      <rect x={975} y={1149} width={475} height={96} fill="#d7d7d7" />
      <rect x={975} y={1245} width={475} height={1} fill="#7c7c7c" />
      {DAYS.map(([label, total, orange, teal], i) => {
        const x = 978 + Math.round(i * 34.03);
        return (
          <React.Fragment key={label}>
            {total !== null && <rect x={x} y={total} width={26} height={1481 - total} fill="#d58ab0" />}
            {orange !== null && <rect x={x} y={orange} width={26} height={1481 - orange} fill="#f4b152" />}
            {teal !== null && <rect x={x} y={teal} width={26} height={1481 - teal} fill="#75cfcf" />}
            <rect x={974 + Math.round(i * 34.03)} y={1482} width={2} height={8} fill={AXIS} />
            <Txt x={x + 23.5} y={1491.5} w={label === "Null" ? 43 : 71} size={25} anchor="end" vertical>
              {label}
            </Txt>
          </React.Fragment>
        );
      })}
      <rect x={974} y={957} width={1} height={525} fill={AXIS} />
      <rect x={974} y={1481.5} width={476} height={1.2} fill={AXIS} />
      {([["400", 1021.5], ["300", 1139.5], ["200", 1255.5], ["100", 1373], ["0", 1471]] as [string, number][]).map(([s, y]) => (
        <Txt key={s} x={961.5} y={y} w={s === "0" ? 14 : 42.5} size={24} anchor="end">
          {s}
        </Txt>
      ))}
      <rect x={975} y={1207} width={475} height={4} fill="#9bd086" />
      <rect x={976} y={1171} width={96} height={36} fill="#fff" />
      <Txt x={980} y={1199} w={84.5} size={24} weight={550} fill="#7a7a7a">
        Median
      </Txt>
      <Txt x={894.5} y={1335.5} w={233} size={25} weight={650} vertical>
        Avg. Days On Market
      </Txt>
    </svg>
  );
}

/* blue top, light top, orange top */
const CATEGORY: [number, number | null, number | null][] = [
  [1037, 1109, 1313],
  [1407, 1447, 1459],
  [1477, null, 1525],
  [1491, 1495, 1513],
  [1495, 1499, 1513],
  [1503, 1513, 1517],
  [1503, null, 1543],
  [1525, null, 1531],
  [1539, null, 1543],
  [1539, null, null],
  [1543, null, 1553],
  [1553, null, null],
  [1553, null, null],
];

function CategoryChart() {
  return (
    <svg className="block" width={556} height={673} viewBox="1458 952 556 673">
      <Txt x={1690} y={1001} w={206} size={23} weight={600}>
        Zip Or Postal Code
      </Txt>
      <Grid rows={[1026, 1114, 1202, 1292, 1380, 1470]} x1={1564} x2={2014} />
      {CATEGORY.map(([blue, light, orange], i) => {
        const x = 1576 + i * 34;
        return (
          <React.Fragment key={i}>
            <rect x={x} y={blue} width={26} height={1557 - blue} fill="#3975b0" />
            {light !== null && <rect x={x} y={light} width={26} height={1557 - light} fill="#b1c5e6" />}
            {orange !== null && <rect x={x} y={orange} width={26} height={1557 - orange} fill="#f08835" />}
            {i > 0 && <rect x={1572.5 + i * 34} y={1558} width={2} height={3} fill={AXIS} />}
          </React.Fragment>
        );
      })}
      <rect x={1572} y={1011} width={1} height={548} fill={AXIS} />
      <rect x={1572} y={1558} width={442} height={1.2} fill={AXIS} />
      {(
        [["120", 1037], ["100", 1121.5], ["80", 1209], ["60", 1299.5], ["40", 1387], ["20", 1477], ["0", 1547.5]] as [
          string,
          number,
        ][]
      ).map(([s, y]) => (
        <Txt key={s} x={1559.5} y={y} w={s.length * 14} size={24} anchor="end">
          {s}
        </Txt>
      ))}
      {["971..", "970..", "970..", "970..", "972.."].map((s, i) => (
        <Txt key={i} x={1594 + i * 67.9} y={1587} w={58} size={25}>
          {s}
        </Txt>
      ))}
      <Txt x={1927} y={1587} w={71.5} size={25}>
        97219
      </Txt>
      <Txt x={1506.5} y={1329.5} w={91} size={25} weight={650} vertical>
        # of Mls
      </Txt>
    </svg>
  );
}

/* ------------------------------------------------------------------ */
/* Sidebar                                                             */
/* ------------------------------------------------------------------ */

function FilterLabel({ children }: { children: string }) {
  return (
    <div className="h-9 pl-6 text-[28px] leading-9 font-[650] tracking-[0.2px] text-white">{children}</div>
  );
}

function Select({ label, value }: { label: string; value: string }) {
  return (
    <div>
      <FilterLabel>{label}</FilterLabel>
      <div className="mt-[5px] ml-[26px] flex h-10 w-[274px] items-center justify-between rounded-[2px] border-2 border-[#ebebeb] bg-[#bebebe] pr-3 pl-[5px]">
        <span className="text-[23px] leading-none tracking-[0.05px] text-[#e8e8e8]">{value}</span>
        <svg width={12} height={8} viewBox="0 0 12 8">
          <path d="M0,0.5H12L7,7.5H5Z" fill="#e8e8e8" />
        </svg>
      </div>
    </div>
  );
}

function Kpi({ label, value, className }: { label: string; value: string; className: string }) {
  return (
    <div className={`flex flex-col items-end text-[30px] leading-[44px] font-[370] ${className}`}>
      <span className="tracking-[0.4px]">{label}</span>
      <span className="tracking-[0.35px]">{value}</span>
    </div>
  );
}

function Sidebar() {
  return (
    <aside className="flex w-[318px] shrink-0 flex-col pt-[55px]">
      <div className="flex flex-col gap-[46px]">
        <Kpi label="Total Listings:" value="242" className="pr-[61px] text-[#f0b9cb]" />
        <Kpi label="Median $/Sqft:" value="$305.00" className="pr-[61px] text-[#e8c85a]" />
        <Kpi label="Avg Listing Price:" value="$638,163.89" className="pr-[21px] text-[#f0979f]" />
      </div>
      <div className="-mt-px ml-6 h-8 w-[278px] rounded-[2px] border-r-2 border-[#f6f6f6] bg-[#e1e1e1]" />
      <div className="mt-[25px] flex flex-col gap-[39px]">
        <Select label="Zip Code" value="97123" />
        <Select label="Year Built" value="(All)" />
        <Select label="Baths" value="(All)" />
        <Select label="Beds" value="(All)" />
        <div>
          <FilterLabel>Price</FilterLabel>
          <div className="mt-[15px] flex h-6 justify-between pr-[24px] pl-[32px] text-[23px] leading-6 text-[#e6e6e6]">
            <span>409950</span>
            <span>850000</span>
          </div>
          <div className="mt-[14px] ml-[30px] flex h-7 w-[268px] items-center">
            <div className="h-7 w-5 rounded-l-full border-2 border-[#6b6b6b] bg-white" />
            <div className="h-2 flex-1 bg-[#b0b0b0]" />
            <div className="h-7 w-5 rounded-r-full border-2 border-[#6b6b6b] bg-white" />
          </div>
        </div>
      </div>
      <div className="mt-[31px]">
        <Select label="City" value="(Multiple values)" />
      </div>
    </aside>
  );
}

export default function App() {
  return (
    <div className="h-[1644px] w-[2062px] overflow-hidden bg-[#fbfbfb] pt-[25px] pl-[38px] font-['Open_Sans','Noto_Sans',sans-serif]">
      <div className="flex h-[1600px] w-[2000px] bg-[#888888]">
        <Sidebar />
        <main className="flex w-[1658px] flex-col">
          <h1 className="h-[110px] pt-[39px] pr-[3px] text-center text-[39.5px] leading-[50px] font-[630] text-white">
            Client Listings April 03, 25
          </h1>
          <ListingMap />
          <div className="flex">
            <section className="w-[506px]">
              <h2 className="h-[84px] pt-[30px] pl-[9px] text-[38.7px] leading-[54px] font-[640] whitespace-nowrap text-white">
                # of MLs per Price Range
              </h2>
              <PriceRangeChart />
            </section>
            <section className="w-[596px]">
              <h2 className="h-[84px] pt-[31px] pl-[14px] text-[36.5px] leading-[54px] font-[640] whitespace-nowrap text-white">
                Avg Days on Market by Zipcode
              </h2>
              <DaysOnMarketChart />
            </section>
            <section className="w-[556px]">
              <h2 className="h-[135px] pt-[30px] pl-[16px] text-[36.8px] leading-[54px] font-[640] whitespace-nowrap text-white">
                # of MLs per Price Category
                <br />
                by Zipcode
              </h2>
              <CategoryChart />
            </section>
          </div>
        </main>
      </div>
    </div>
  );
}
